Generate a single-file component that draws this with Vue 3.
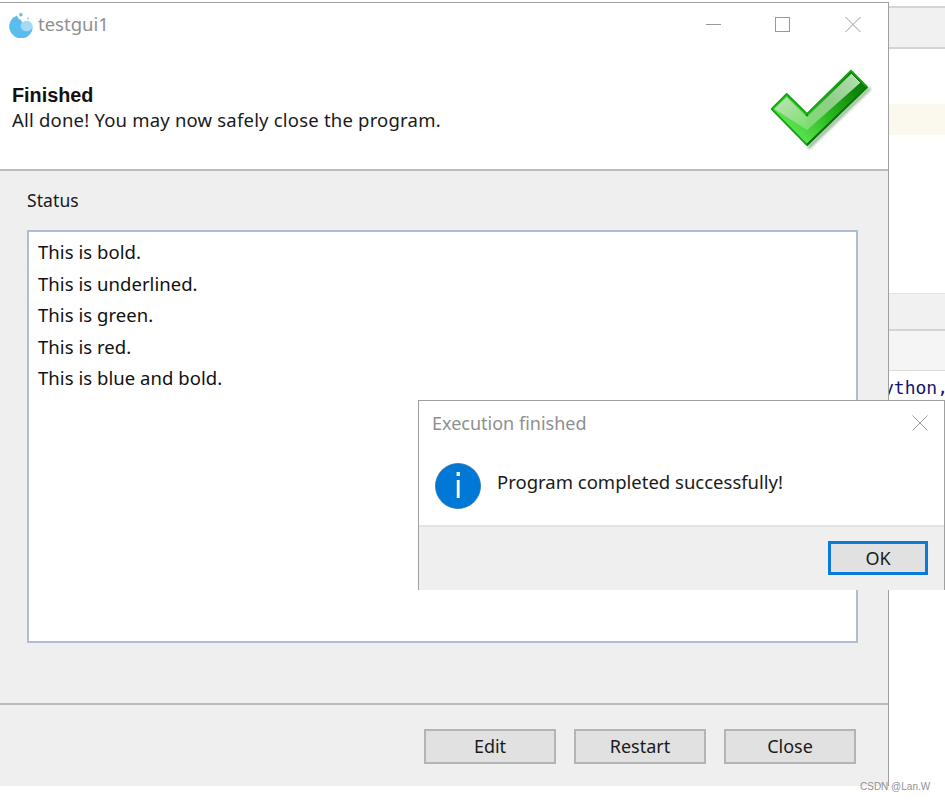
<script setup>
const lines = ['This is bold.', 'This is underlined.', 'This is green.', 'This is red.', 'This is blue and bold.']
const buttons = ['Edit', 'Restart', 'Close']
</script>

<template>
  <div class="desktop">
    <div class="backdrop">
      <div class="bar bar-a"></div>
      <div class="gap-a"></div>
      <div class="note"></div>
      <div class="gap-b"></div>
      <div class="bar bar-b"></div>
      <div class="bar bar-c"></div>
      <div class="code">ython,</div>
    </div>

    <section class="window">
      <header class="titlebar">
        <svg class="app-icon" width="26" height="26" viewBox="0 0 26 26">
          <path d="M9 3.5A11.8 11.8 0 1 0 24.8 14.5 L21 16.5 A6.5 6.5 0 0 1 14 10 A6 6 0 0 1 13 8 A6 6 0 0 1 9 3.5Z" fill="#5bbdee" />
          <ellipse cx="18.6" cy="14" rx="6" ry="5.2" fill="#a5daf4" />
          <rect x="11.4" y="1.2" width="3" height="3" fill="#5bbdee" />
          <rect x="19" y="5.4" width="2" height="2" fill="#a5daf4" />
        </svg>
        <span class="title">testgui1</span>
        <div class="controls">
          <svg width="18" height="18" viewBox="0 0 18 18"><path d="M1 9.5H16" stroke="#999" fill="none" /></svg>
          <svg width="18" height="18" viewBox="0 0 18 18"><rect x="0.5" y="2.5" width="14" height="14" stroke="#999" fill="none" /></svg>
          <svg width="18" height="18" viewBox="0 0 18 18"><path d="M0.5 2 L15.5 17 M15.5 2 L0.5 17" stroke="#999" fill="none" /></svg>
        </div>
      </header>

      <div class="banner">
        <div class="banner-text">
          <div class="banner-head">Finished</div>
          <div class="banner-sub">All done! You may now safely close the program.</div>
        </div>
        <svg class="check" width="104" height="84" viewBox="0 0 104 84">
          <defs>
            <linearGradient id="low" gradientUnits="userSpaceOnUse" x1="30" y1="78" x2="95" y2="18">
              <stop offset="0" stop-color="#62ea58" />
              <stop offset="0.45" stop-color="#2cbb22" />
              <stop offset="1" stop-color="#067a04" />
            </linearGradient>
            <linearGradient id="upl" gradientUnits="userSpaceOnUse" x1="39" y1="60" x2="88" y2="8">
              <stop offset="0" stop-color="#7fdc72" />
              <stop offset="0.5" stop-color="#8fce88" />
              <stop offset="1" stop-color="#b5dcb0" />
            </linearGradient>
            <linearGradient id="ups" gradientUnits="userSpaceOnUse" x1="36" y1="60" x2="12" y2="32">
              <stop offset="0" stop-color="#7ee070" />
              <stop offset="1" stop-color="#b8e0b2" />
            </linearGradient>
            <filter id="soft" x="-10%" y="-10%" width="120%" height="120%"><feGaussianBlur stdDeviation="0.7" /></filter>
            <filter id="glow" x="-10%" y="-10%" width="120%" height="120%"><feGaussianBlur stdDeviation="1.6" /></filter>
          </defs>
          <path d="M39 80 L101 20" stroke="#0a6a08" stroke-width="3" opacity="0.55" fill="none" filter="url(#glow)" />
          <g filter="url(#soft)">
            <path d="M2.7 41 L17.7 26 L38 46 L82 2.7 L98 19 L38 77Z" fill="url(#low)" stroke="#17a314" stroke-width="1.8" stroke-linejoin="round" />
            <path d="M5.5 41 L17.7 29 L38 49 L38 62 Z" fill="url(#ups)" />
            <path d="M38 49 L82 6 L91 15 L38 62 Z" fill="url(#upl)" />
            <path d="M98 19 L38 77" stroke="#096f07" stroke-width="1.8" fill="none" />
            <path d="M82 6 L91 15" stroke="#e6f6e4" stroke-width="0.8" fill="none" />
            <circle cx="38" cy="47" r="1.3" fill="#0f8f0c" />
          </g>
        </svg>
      </div>

      <main class="body">
        <div class="status-label">Status</div>
        <div class="log">
          <div v-for="line in lines" :key="line" class="log-line">{{ line }}</div>
        </div>
      </main>

      <footer class="footer">
        <button v-for="b in buttons" :key="b" class="btn" type="button">{{ b }}</button>
      </footer>
    </section>

    <section class="dialog">
      <div class="dlg-title">
        <span>Execution finished</span>
        <svg width="18" height="18" viewBox="0 0 18 18"><path d="M1.5 1.5 L16.5 16.5 M16.5 1.5 L1.5 16.5" stroke="#999" fill="none" /></svg>
      </div>
      <div class="dlg-msg">
        <svg width="46" height="46" viewBox="0 0 46 46">
          <circle cx="23" cy="23" r="22.5" fill="#0078d7" stroke="#2a6ea8" stroke-width="0.8" />
          <rect x="21.8" y="17" width="2.8" height="18" fill="#fff" />
          <rect x="21.6" y="9" width="3.2" height="4" fill="#fff" />
        </svg>
        <span>Program completed successfully!</span>
      </div>
      <div class="dlg-actions">
        <button class="ok" type="button">OK</button>
      </div>
    </section>

    <div class="watermark">CSDN @Lan.W</div>
  </div>
</template>

<style>
html, body { margin: 0; background: #fff; }
</style>

<style scoped>
.desktop {
  position: relative;
  width: 945px;
  height: 800px;
  overflow: hidden;
  background: #fff;
  font-family: "Noto Sans", "Open Sans", sans-serif;
  color: #1a1a1a;
}
.backdrop {
  position: absolute;
  left: 888px;
  top: 6px;
  width: 57px;
  display: flex;
  flex-direction: column;
}
.bar { background: #f1f1f1; border-top: 2px solid #d4d4d4; }
.bar-a { height: 39px; border-bottom: 2px solid #d4d4d4; }
.gap-a { height: 55px; }
.note { height: 31px; background: #fbf9ee; }
.gap-b { height: 158px; }
.bar-b { height: 35px; border-top: 1px solid #e2e2e2; border-bottom: 2px solid #d4d4d4; }
.bar-c { height: 39px; border-top: 0; border-bottom: 1px solid #dcdcdc; background: #f5f5f5; }
.code {
  font-family: "DejaVu Sans Mono", monospace;
  font-size: 18px;
  line-height: 30px;
  color: #14146e;
  margin-top: 2px;
  margin-left: -5px;
  white-space: nowrap;
}

.window {
  position: absolute;
  left: 0;
  top: 2px;
  width: 888px;
  height: 783px;
  border-top: 1px solid #a0a0a0;
  border-right: 1px solid #a0a0a0;
  display: flex;
  flex-direction: column;
  background: #fff;
}
.titlebar {
  height: 47px;
  display: flex;
  align-items: center;
  padding-left: 8px;
  flex: none;
}
.app-icon { margin-top: -4px; }
.title { font-size: 18.5px; color: #8f8f8f; margin-left: 4px; margin-top: -6px; }
.controls {
  margin-left: auto;
  display: flex;
  gap: 52px;
  margin-right: 25px;
  margin-top: -5px;
}
.banner {
  height: 119px;
  flex: none;
  display: flex;
  align-items: flex-start;
  padding-left: 12px;
  position: relative;
}
.banner-text { padding-top: 33px; }
.banner-head {
  font-family: "Liberation Sans", sans-serif;
  font-weight: 700;
  font-size: 19.8px;
  line-height: 24px;
  color: #111;
}
.banner-sub { font-size: 18.5px; letter-spacing: 0.2px; line-height: 25px; color: #1a1a1a; }
.check { position: absolute; left: 769px; top: 18px; }
.body {
  flex: none;
  height: 536px;
  box-sizing: border-box;
  background: #efefef;
  border-top: 2px solid #bcbcbc;
  border-bottom: 2px solid #bcbcbc;
  padding: 17px 30px 0 27px;
}
.status-label { font-size: 17.5px; line-height: 24px; height: 42px; letter-spacing: 0.1px; }
.log {
  box-sizing: border-box;
  height: 413px;
  background: #fff;
  border: 2px solid #aebcd4;
  padding: 4px 9px;
}
.log-line { font-size: 18.5px; letter-spacing: 0.05px; line-height: 31.5px; color: #111; }
.footer {
  flex: 1;
  background: #efefef;
  display: flex;
  justify-content: flex-end;
  align-items: flex-start;
  gap: 18px;
  padding: 24px 32px 0 0;
}
.btn {
  width: 132px;
  height: 35px;
  box-sizing: border-box;
  background: #e1e1e1;
  border: 2px solid #b4b4b4;
  font: inherit;
  font-size: 18px;
  color: #1a1a1a;
  padding: 0 0 2px;
}

.dialog {
  position: absolute;
  left: 418px;
  top: 400px;
  width: 527px;
  height: 190px;
  box-sizing: border-box;
  border-top: 1px solid #a0a0a0;
  border-left: 1px solid #a0a0a0;
  border-right: 1px solid #a0a0a0;
  background: #fff;
  display: flex;
  flex-direction: column;
}
.dlg-title {
  height: 44px;
  flex: none;
  display: flex;
  align-items: center;
  justify-content: space-between;
  padding: 0 15px 0 13px;
  font-size: 18px;
  color: #8f8f8f;
}
.dlg-msg {
  height: 80px;
  flex: none;
  display: flex;
  align-items: flex-start;
  padding: 18px 0 0 16px;
  box-sizing: border-box;
  gap: 16px;
  font-size: 18.5px;
  color: #1a1a1a;
}
.dlg-msg span { line-height: 38px; }
.dlg-actions {
  flex: 1;
  background: #efefef;
  border-top: 2px solid #e3e3e3;
  display: flex;
  justify-content: flex-end;
  align-items: flex-start;
  padding: 14px 16px 0 0;
}
.ok {
  width: 100px;
  height: 34px;
  box-sizing: border-box;
  background: #e1e1e1;
  border: 3px solid #0a7ad8;
  font: inherit;
  font-size: 18px;
  color: #1a1a1a;
  padding: 0;
}
.watermark {
  position: absolute;
  left: 860px;
  top: 780px;
  font-family: "Liberation Sans", sans-serif;
  font-size: 10px;
  line-height: 13px;
  color: #929292;
  white-space: nowrap;
}
</style>
